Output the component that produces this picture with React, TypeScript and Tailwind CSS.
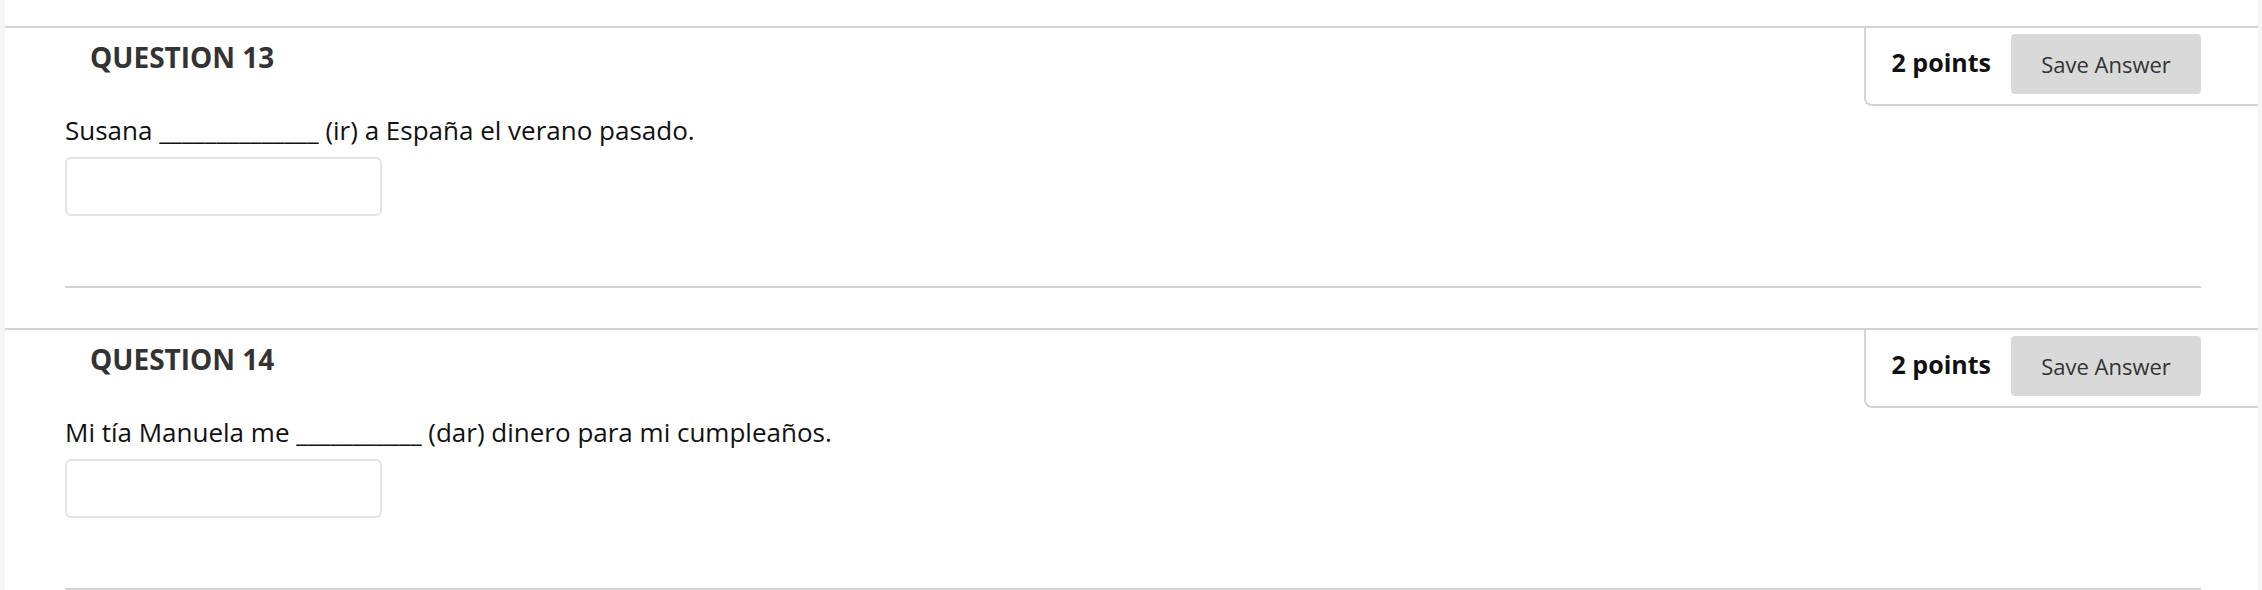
import React from "react";

type Question = {
  num: number;
  before: string;
  blank: string;
  after: string;
};

const questions: Question[] = [
  { num: 13, before: "Susana ", blank: "______________", after: " (ir) a España el verano pasado." },
  { num: 14, before: "Mi tía Manuela me ", blank: "___________", after: " (dar) dinero para mi cumpleaños." },
];

function QuestionBlock({ q }: { q: Question }) {
  return (
    <div className="border-t-2 border-[#d2d2d2] pl-[60px] pb-[40px]">
      {/* header: title + points box */}
      <div className="flex justify-between items-start h-[78px]">
        <h3 className="pl-[25px] pt-[10px] text-[28px] leading-[38px] font-bold text-[#333333]">
          QUESTION {q.num}
        </h3>
        <div className="h-[78px] flex items-start pt-[6px] pl-[26px] pr-[57px] border-l-2 border-b-2 border-[#d4d4d4] rounded-bl-[8px]">
          <div className="flex items-center h-[60px] gap-[20px]">
            <span className="text-[25px] leading-[34px] font-bold text-[#111111] -mt-[4px]">2 points</span>
            <button
              type="button"
              className="w-[190px] h-[60px] bg-[#d9d9d9] rounded-[4px] text-[22px] leading-[30px] text-[#333333]"
            >
              Save Answer
            </button>
          </div>
        </div>
      </div>

      {/* body */}
      <p className="mt-[6px] text-[26px] leading-[36px] text-[#111111] whitespace-pre">
        {q.before}
        {q.blank}
        {q.after}
      </p>
      <input
        type="text"
        className="mt-[9px] block w-[317px] h-[59px] border-2 border-[#e4e4e4] rounded-[6px] bg-white"
      />

      <div className="mt-[70px] mr-[57px] h-[2px] bg-[#d2d2d2]" />
    </div>
  );
}

export default function App() {
  return (
    <div className="h-[590px] w-full overflow-hidden flex bg-white font-['Open_Sans',sans-serif]">
      <div className="w-[5px] bg-[#f6f6f6] shrink-0" />
      <main className="flex-1 pt-[26px]">
        {questions.map((q) => (
          <QuestionBlock key={q.num} q={q} />
        ))}
      </main>
      <div className="w-[4px] bg-[#f6f6f6] shrink-0" />
    </div>
  );
}
